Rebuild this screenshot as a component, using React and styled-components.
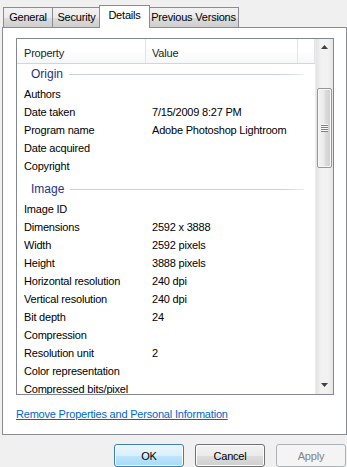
import React from "react";
import styled, { createGlobalStyle, css } from "styled-components";

const Global = createGlobalStyle`
  html, body { margin: 0; padding: 0; background: #f0f0f0; }
  body { font-family: "Liberation Sans", Arial, sans-serif; font-size: 11px; letter-spacing: -0.2px; color: #000; }
  #root { width: 347px; height: 467px; overflow: hidden; }
`;

const Window = styled.div`
  width: 347px;
  height: 467px;
  display: flex;
  flex-direction: column;
  background: #f0f0f0;
`;

const TabStrip = styled.div`
  display: flex;
  align-items: flex-end;
  height: 27px;
  padding-left: 3px;
  position: relative;
  z-index: 1;
`;

const Tab = styled.div`
  box-sizing: border-box;
  width: ${(p) => p.$w}px;
  height: ${(p) => (p.$active ? "23px" : "20px")};
  margin: ${(p) => (p.$active ? "0 -1px -1px" : "0")};
  display: flex;
  align-items: center;
  justify-content: center;
  border: 1px solid #898c95;
  border-bottom: none;
  margin-left: ${(p) => (p.$first ? "0" : p.$active ? "-2px" : "-1px")};
  ${(p) =>
    p.$active
      ? css`
          background: #ffffff;
          position: relative;
          z-index: 2;
          padding-bottom: 3px;
        `
      : css`
          background: linear-gradient(#f2f2f2, #ebebeb 50%, #dddddd 51%, #cfcfcf);
        `}
  color: #000;
  white-space: nowrap;
`;

const Panel = styled.div`
  box-sizing: border-box;
  margin-left: 2px;
  width: 345px;
  height: 412px;
  border: 1px solid #898c95;
  background: #ffffff;
  padding: 10px 0 0 13px;
  display: flex;
  flex-direction: column;
`;

const ListBox = styled.div`
  box-sizing: border-box;
  width: 318px;
  height: 357px;
  border: 1px solid #828790;
  display: flex;
  background: #fff;
`;

const ListMain = styled.div`
  flex: 1;
  display: flex;
  flex-direction: column;
  overflow: hidden;
`;

const Header = styled.div`
  display: grid;
  grid-template-columns: 129px 152px 1fr;
  height: 25px;
  flex: none;
  background: linear-gradient(#ffffff, #ffffff 50%, #f6f7f8);
  border-bottom: 1px solid #d5d5d5;
  box-sizing: border-box;
`;

const HeaderCell = styled.div`
  display: flex;
  align-items: center;
  padding-top: 4px;
  padding-left: ${(p) => p.$pad || 6}px;
  border-right: 1px solid #e3e4e6;
  color: #1e1e1e;
`;

const Rows = styled.div`
  flex: 1;
  overflow: hidden;
`;

const Group = styled.div`
  display: flex;
  align-items: center;
  height: 21px;
  margin-top: ${(p) => (p.$first ? "0" : "4px")};
  padding-left: 14px;
  padding-right: 11px;
  gap: 6px;
  color: #1e3287;
  font-size: 12px;
  letter-spacing: 0;
`;

const GroupLine = styled.div`
  flex: 1;
  height: 1px;
  background: linear-gradient(to right, #c7d1e2, #c7d1e2 90%, #e8ecf3);
`;

const Row = styled.div`
  display: grid;
  grid-template-columns: 128px 1fr;
  height: 18px;
  align-items: center;
  padding-left: 7px;
  white-space: nowrap;
`;

const Cell = styled.div`
  overflow: hidden;
`;

const ScrollBar = styled.div`
  width: 17px;
  flex: none;
  display: flex;
  flex-direction: column;
  align-items: center;
  background: linear-gradient(to right, #e3e3e3, #f2f2f2 30%, #f2f2f2 70%, #e6e6e6);
  border-left: 1px solid #ececec;
`;

const Arrow = styled.div`
  height: 17px;
  width: 17px;
  display: flex;
  align-items: center;
  justify-content: center;
  flex: none;
`;

const Track = styled.div`
  flex: 1;
  width: 100%;
  display: flex;
  flex-direction: column;
  padding-top: 32px;
  box-sizing: border-box;
  align-items: center;
`;

const Thumb = styled.div`
  box-sizing: border-box;
  width: 15px;
  height: 80px;
  border: 1px solid #979797;
  border-radius: 2px;
  background: linear-gradient(to right, #f2f2f2, #ebebeb 45%, #dcdcdc 55%, #cfcfcf);
  box-shadow: inset 0 0 0 1px #f7f7f7;
  display: flex;
  align-items: center;
  justify-content: center;
`;

const Grip = styled.div`
  width: 7px;
  height: 8px;
  background: repeating-linear-gradient(#f8f8f8 0 1px, #808080 1px 2px);
`;

const LinkRow = styled.div`
  margin-top: 13px;
`;

const Link = styled.a`
  color: #0066cc;
  text-decoration: underline;
  cursor: pointer;
`;

const Buttons = styled.div`
  display: flex;
  justify-content: flex-end;
  gap: 11px;
  padding: 9px 1px 0 0;
`;

const Button = styled.button`
  box-sizing: border-box;
  width: 70px;
  height: 23px;
  font-family: inherit;
  font-size: 11px;
  letter-spacing: -0.2px;
  border-radius: 3px;
  padding: 0;
  ${(p) =>
    p.$default
      ? css`
          border: 1px solid #3c7fb1;
          background: linear-gradient(#eaf6fd, #d9f0fc 50%, #bee6fd 51%, #a7d9f5);
          box-shadow: inset 0 0 0 1px #fbfdff;
          color: #000;
        `
      : p.disabled
      ? css`
          border: 1px solid #adb2b5;
          background: #f4f4f4;
          color: #838383;
        `
      : css`
          border: 1px solid #707070;
          background: linear-gradient(#f2f2f2, #ebebeb 50%, #dddddd 51%, #cfcfcf);
          box-shadow: inset 0 0 0 1px #fcfcfc;
          color: #000;
        `}
`;

const UpIcon = () => (
  <svg width="7" height="4" viewBox="0 0 7 4">
    <path d="M0 4 L3.5 0 L7 4 Z" fill="#404040" />
  </svg>
);
const DownIcon = () => (
  <svg width="7" height="4" viewBox="0 0 7 4">
    <path d="M0 0 L3.5 4 L7 0 Z" fill="#404040" />
  </svg>
);

const groups = [
  {
    title: "Origin",
    rows: [
      ["Authors", ""],
      ["Date taken", "7/15/2009 8:27 PM"],
      ["Program name", "Adobe Photoshop Lightroom"],
      ["Date acquired", ""],
      ["Copyright", ""],
    ],
  },
  {
    title: "Image",
    rows: [
      ["Image ID", ""],
      ["Dimensions", "2592 x 3888"],
      ["Width", "2592 pixels"],
      ["Height", "3888 pixels"],
      ["Horizontal resolution", "240 dpi"],
      ["Vertical resolution", "240 dpi"],
      ["Bit depth", "24"],
      ["Compression", ""],
      ["Resolution unit", "2"],
      ["Color representation", ""],
      ["Compressed bits/pixel", ""],
    ],
  },
];

export default function App() {
  return (
    <Window>
      <Global />
      <TabStrip>
        <Tab $first $w={50}>General</Tab>
        <Tab $w={49}>Security</Tab>
        <Tab $active $w={51}>Details</Tab>
        <Tab $w={91}>Previous Versions</Tab>
      </TabStrip>
      <Panel>
        <ListBox>
          <ListMain>
            <Header>
              <HeaderCell $pad={7}>Property</HeaderCell>
              <HeaderCell>Value</HeaderCell>
              <HeaderCell />
            </Header>
            <Rows>
              {groups.map((g, gi) => (
                <React.Fragment key={g.title}>
                  <Group $first={gi === 0}>
                    {g.title}
                    <GroupLine />
                  </Group>
                  {g.rows.map(([k, v]) => (
                    <Row key={k}>
                      <Cell>{k}</Cell>
                      <Cell>{v}</Cell>
                    </Row>
                  ))}
                </React.Fragment>
              ))}
            </Rows>
          </ListMain>
          <ScrollBar>
            <Arrow>
              <UpIcon />
            </Arrow>
            <Track>
              <Thumb>
                <Grip />
              </Thumb>
            </Track>
            <Arrow>
              <DownIcon />
            </Arrow>
          </ScrollBar>
        </ListBox>
        <LinkRow>
          <Link>Remove Properties and Personal Information</Link>
        </LinkRow>
      </Panel>
      <Buttons>
        <Button $default>OK</Button>
        <Button>Cancel</Button>
        <Button disabled>Apply</Button>
      </Buttons>
    </Window>
  );
}
